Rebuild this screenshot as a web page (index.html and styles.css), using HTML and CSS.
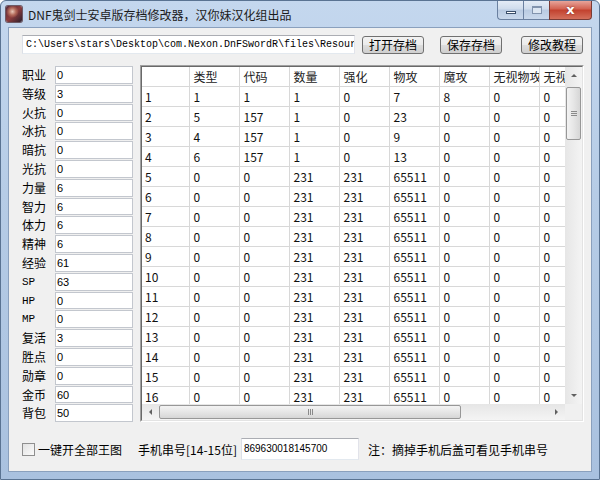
FILE: index.html
```html
<!DOCTYPE html>
<html lang="zh-CN">
<head>
    <meta charset="UTF-8">
    <title>DNF鬼剑士安卓版存档修改器</title>
    <link rel="stylesheet" href="styles.css">
</head>
<body>
<div class="window">
    <div class="titlebar">
        <span class="app-icon"></span>
        <span class="title">DNF鬼剑士安卓版存档修改器，汉你妹汉化组出品</span>
        <div class="controls">
            <span class="ctl ctl-min"><i></i></span>
            <span class="ctl ctl-max"><i></i></span>
            <span class="ctl ctl-close">x</span>
        </div>
    </div>

    <div class="client">
        <div class="toolbar">
            <div class="path-box">C:\Users\stars\Desktop\com.Nexon.DnFSwordR\files\Resources</div>
            <button class="win-btn btn-open">打开存档</button>
            <button class="win-btn btn-save">保存存档</button>
            <button class="win-btn btn-help">修改教程</button>
        </div>

        <div class="main">
            <div class="stats">
                <span class="label">职业</span><span class="field">0</span>
                <span class="label">等级</span><span class="field">3</span>
                <span class="label">火抗</span><span class="field">0</span>
                <span class="label">冰抗</span><span class="field">0</span>
                <span class="label">暗抗</span><span class="field">0</span>
                <span class="label">光抗</span><span class="field">0</span>
                <span class="label">力量</span><span class="field">6</span>
                <span class="label">智力</span><span class="field">6</span>
                <span class="label">体力</span><span class="field">6</span>
                <span class="label">精神</span><span class="field">6</span>
                <span class="label">经验</span><span class="field">61</span>
                <span class="label mono">SP</span><span class="field">63</span>
                <span class="label mono">HP</span><span class="field">0</span>
                <span class="label mono">MP</span><span class="field">0</span>
                <span class="label">复活</span><span class="field">3</span>
                <span class="label">胜点</span><span class="field">0</span>
                <span class="label">勋章</span><span class="field">0</span>
                <span class="label">金币</span><span class="field">60</span>
                <span class="label">背包</span><span class="field">50</span>
            </div>

            <div class="grid-box">
                <div class="grid-inner">
                    <div class="cells">
                        <table class="items">
                            <colgroup>
                                <col class="col-head">
                                <col><col><col><col><col><col><col><col>
                            </colgroup>
                            <tr class="head-row"><th></th><th>类型</th><th>代码</th><th>数量</th><th>强化</th><th>物攻</th><th>魔攻</th><th>无视物攻</th><th>无视魔攻</th></tr>
                            <tr><td>1</td><td>1</td><td>1</td><td>1</td><td>0</td><td>7</td><td>8</td><td>0</td><td>0</td></tr>
                            <tr><td>2</td><td>5</td><td>157</td><td>1</td><td>0</td><td>23</td><td>0</td><td>0</td><td>0</td></tr>
                            <tr><td>3</td><td>4</td><td>157</td><td>1</td><td>0</td><td>9</td><td>0</td><td>0</td><td>0</td></tr>
                            <tr><td>4</td><td>6</td><td>157</td><td>1</td><td>0</td><td>13</td><td>0</td><td>0</td><td>0</td></tr>
                            <tr><td>5</td><td>0</td><td>0</td><td>231</td><td>231</td><td>65511</td><td>0</td><td>0</td><td>0</td></tr>
                            <tr><td>6</td><td>0</td><td>0</td><td>231</td><td>231</td><td>65511</td><td>0</td><td>0</td><td>0</td></tr>
                            <tr><td>7</td><td>0</td><td>0</td><td>231</td><td>231</td><td>65511</td><td>0</td><td>0</td><td>0</td></tr>
                            <tr><td>8</td><td>0</td><td>0</td><td>231</td><td>231</td><td>65511</td><td>0</td><td>0</td><td>0</td></tr>
                            <tr><td>9</td><td>0</td><td>0</td><td>231</td><td>231</td><td>65511</td><td>0</td><td>0</td><td>0</td></tr>
                            <tr><td>10</td><td>0</td><td>0</td><td>231</td><td>231</td><td>65511</td><td>0</td><td>0</td><td>0</td></tr>
                            <tr><td>11</td><td>0</td><td>0</td><td>231</td><td>231</td><td>65511</td><td>0</td><td>0</td><td>0</td></tr>
                            <tr><td>12</td><td>0</td><td>0</td><td>231</td><td>231</td><td>65511</td><td>0</td><td>0</td><td>0</td></tr>
                            <tr><td>13</td><td>0</td><td>0</td><td>231</td><td>231</td><td>65511</td><td>0</td><td>0</td><td>0</td></tr>
                            <tr><td>14</td><td>0</td><td>0</td><td>231</td><td>231</td><td>65511</td><td>0</td><td>0</td><td>0</td></tr>
                            <tr><td>15</td><td>0</td><td>0</td><td>231</td><td>231</td><td>65511</td><td>0</td><td>0</td><td>0</td></tr>
                            <tr><td>16</td><td>0</td><td>0</td><td>231</td><td>231</td><td>65511</td><td>0</td><td>0</td><td>0</td></tr>
                            <tr><td>17</td><td>0</td><td>0</td><td>231</td><td>231</td><td>65511</td><td>0</td><td>0</td><td>0</td></tr>
                        </table>
                    </div>
                    <div class="vscroll">
                        <span class="arrow"><i class="tri-up"></i></span>
                        <div class="vtrack"><div class="vthumb"><i></i><i></i><i></i></div></div>
                        <span class="arrow"><i class="tri-down"></i></span>
                    </div>
                    <div class="hscroll">
                        <span class="arrow"><i class="tri-left"></i></span>
                        <div class="htrack"><div class="hthumb"><i></i><i></i><i></i></div></div>
                        <span class="arrow"><i class="tri-right"></i></span>
                    </div>
                    <div class="corner"></div>
                </div>
            </div>
        </div>

        <div class="bottom">
            <span class="checkbox"></span>
            <span class="check-text">一键开全部王图</span>
            <span class="imei-label">手机串号[14-15位]</span>
            <div class="imei-box">869630018145700</div>
            <span class="note">注：摘掉手机后盖可看见手机串号</span>
        </div>
    </div>
</div>
</body>
</html>
```

FILE: styles.css
```css
*{
    box-sizing: border-box;
}
body{
    margin: 0;
    background-color: #ffffff;
    font-family: "Noto Sans CJK SC", sans-serif;
    font-size: 12px;
    color: #000;
}

/* window frame */
.window{
    width: 600px;
    height: 480px;
    background: linear-gradient(to bottom, #c4d7ee, #b6cce6 40%, #a9c1df);
    border: 1px solid #5a7392;
    border-radius: 6px 6px 0 0;
    padding: 0 7px 7px 7px;
    display: flex;
    flex-direction: column;
}
.titlebar{
    height: 26px;
    display: flex;
    align-items: center;
    padding-left: 0;
}
.app-icon{
    width: 16px;
    height: 16px;
    margin-left: -2px;
    border-radius: 2px;
    background:
        radial-gradient(circle at 40% 35%, #e9c7b8 0, #b36a5a 25%, transparent 45%),
        linear-gradient(135deg, #5a2b3a, #8e3d3d 50%, #2c1f2c);
    box-shadow: 0 0 0 1px #6d5a66;
}
.title{
    margin-left: 6px;
    font-size: 12px;
    color: #1b1b1b;
    letter-spacing: 0;
}
.controls{
    margin-left: auto;
    align-self: flex-start;
    display: flex;
    margin-top: 0;
}
.ctl{
    height: 19px;
    display: flex;
    align-items: center;
    justify-content: center;
    border: 1px solid #6a80a0;
    border-top: none;
}
.ctl-min,
.ctl-max{
    width: 26px;
    background: linear-gradient(to bottom, #e4ecf6, #cfdcec 45%, #b9cbe2 50%, #c9d8ec);
    border-right: none;
}
.ctl-min{
    border-radius: 0 0 0 4px;
}
.ctl-min i{
    width: 10px;
    height: 3px;
    margin-top: 5px;
    background: #ffffff;
    border: 1px solid #3b4f6b;
}
.ctl-max i{
    width: 10px;
    height: 8px;
    border: 1px solid #8294ae;
    border-top-width: 2px;
    background: #dce6f2;
}
.ctl-close{
    width: 43px;
    background: linear-gradient(to bottom, #e7a49a, #d2604f 45%, #c2412e 50%, #d4705c);
    border-radius: 0 0 4px 0;
    border-color: #7a3b35;
    color: #ffffff;
    font-family: "DejaVu Sans", sans-serif;
    font-weight: bold;
    font-size: 13px;
    line-height: 1;
    padding-bottom: 2px;
    text-shadow: 0 0 2px #7a2a20;
}

/* client area */
.client{
    flex: 1;
    background-color: #f0f0f0;
    border: 1px solid #8aa0bd;
    padding: 7px 0 0 13px;
    display: flex;
    flex-direction: column;
}
.toolbar{
    display: flex;
    align-items: center;
    height: 19px;
}
.path-box{
    width: 333px;
    height: 19px;
    background: #ffffff;
    border: 1px solid;
    border-color: #abadb3 #e2e3ea #e3e9ef #dbdfe6;
    font-family: "Liberation Mono", monospace;
    font-size: 10px;
    line-height: 17px;
    padding-left: 3px;
    white-space: nowrap;
    overflow: hidden;
}
.win-btn{
    height: 18px;
    width: 62px;
    padding: 0;
    border: 1px solid #707070;
    border-radius: 3px;
    background: linear-gradient(to bottom, #f2f2f2, #ebebeb 50%, #dddddd 51%, #cfcfcf);
    font-family: "Noto Sans CJK SC", sans-serif;
    font-size: 12px;
    line-height: 16px;
    color: #000;
}
.btn-open{
    margin-left: 7px;
}
.btn-save{
    margin-left: 16px;
}
.btn-help{
    margin-left: 19px;
}

.main{
    display: flex;
    margin-top: 11px;
}

/* stats panel */
.stats{
    display: grid;
    grid-template-columns: 33px 78px;
    grid-auto-rows: 18.8px;
    margin-top: 1px;
}
.label{
    font-size: 12px;
    line-height: 18px;
}
.label.mono{
    font-family: "Liberation Mono", monospace;
    font-size: 11px;
}
.field{
    background: #ffffff;
    border: 1px solid #c3c7ce;
    font-family: "Liberation Sans", sans-serif;
    font-size: 11px;
    line-height: 16px;
    padding-left: 1px;
    margin-bottom: 1px;
}

/* data grid */
.grid-box{
    width: 444px;
    height: 357px;
    margin-left: 7px;
    border: 1px solid;
    border-color: #a0a0a0 #ffffff #ffffff #a0a0a0;
}
.grid-inner{
    height: 100%;
    border: 1px solid;
    border-color: #696969 #e3e3e3 #e3e3e3 #696969;
    display: grid;
    grid-template-columns: 1fr 17px;
    grid-template-rows: 1fr 16px;
    background: #f0f0f0;
}
.cells{
    overflow: hidden;
    background: #ffffff;
}
.items{
    border-collapse: collapse;
    table-layout: fixed;
    width: 447px;
}
.items col{
    width: 50px;
}
.items .col-head{
    width: 47px;
}
.items th,
.items td{
    height: 20px;
    padding: 0 0 0 4px;
    border: 1px solid #d8d8d8;
    text-align: left;
    font-weight: normal;
    font-size: 12px;
    white-space: nowrap;
    overflow: hidden;
    color: #111;
}
.items tr:first-child th{
    border-top: none;
    height: 19px;
    color: #222;
}
.items th:first-child,
.items td:first-child{
    border-left: none;
    padding-left: 3px;
}

/* scrollbars */
.vscroll{
    display: flex;
    flex-direction: column;
    background: linear-gradient(to right, #e6e6e6, #f4f4f4);
}
.vtrack,
.htrack{
    flex: 1;
}
.arrow{
    width: 17px;
    height: 17px;
    display: flex;
    align-items: center;
    justify-content: center;
}
.hscroll .arrow{
    height: 16px;
}
.tri-up,
.tri-down,
.tri-left,
.tri-right{
    width: 0;
    height: 0;
    border: 3px solid transparent;
}
.tri-up{
    border-bottom: 3px solid #606060;
    border-top-width: 0;
}
.tri-down{
    border-top: 3px solid #606060;
    border-bottom-width: 0;
}
.tri-left{
    border-right: 3px solid #606060;
    border-left-width: 0;
}
.tri-right{
    border-left: 3px solid #606060;
    border-right-width: 0;
}
.vthumb{
    margin: 3px 0 0 1px;
    width: 15px;
    height: 53px;
    border: 1px solid #979797;
    border-radius: 2px;
    background: linear-gradient(to right, #f3f3f3, #e6e6e6 50%, #d6d6d6);
    display: flex;
    flex-direction: column;
    justify-content: center;
    align-items: center;
    gap: 1px;
}
.vthumb i{
    width: 6px;
    height: 1px;
    background: #8a8a8a;
}
.hscroll{
    display: flex;
    background: linear-gradient(to bottom, #e6e6e6, #f4f4f4);
}
.hthumb{
    margin-top: 1px;
    width: 302px;
    height: 14px;
    border: 1px solid #979797;
    border-radius: 2px;
    background: linear-gradient(to bottom, #f3f3f3, #e6e6e6 50%, #d6d6d6);
    display: flex;
    justify-content: center;
    align-items: center;
    gap: 1px;
}
.hthumb i{
    width: 1px;
    height: 6px;
    background: #8a8a8a;
}
.corner{
    background: #f0f0f0;
}

/* bottom row */
.bottom{
    display: flex;
    align-items: center;
    margin-top: 15px;
    height: 22px;
}
.checkbox{
    width: 13px;
    height: 13px;
    border: 1px solid #8f8f8f;
    background: linear-gradient(135deg, #e2e2e2, #fbfbfb);
}
.check-text{
    margin-left: 3px;
}
.imei-label{
    margin-left: 16px;
}
.imei-box{
    margin-left: 4px;
    width: 118px;
    height: 22px;
    background: #ffffff;
    border: 1px solid;
    border-color: #abadb3 #e2e3ea #e3e9ef #dbdfe6;
    font-family: "Liberation Sans", sans-serif;
    font-size: 10px;
    line-height: 19px;
    padding-left: 2px;
}
.note{
    margin-left: 9px;
}
```
